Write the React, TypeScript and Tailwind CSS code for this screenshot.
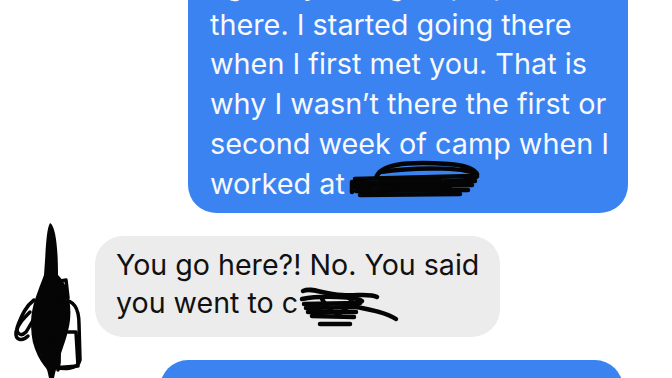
import React from "react";

function Scribble({ className, d, w, h }: { className: string; d: string[]; w: number; h: number }) {
  return (
    <svg className={className} width={w} height={h} viewBox={`0 0 ${w} ${h}`} fill="none">
      {d.map((p, i) => (
        <path key={i} d={p} stroke="#050505" strokeWidth={4.5} strokeLinecap="round" strokeLinejoin="round" />
      ))}
    </svg>
  );
}

export default function App() {
  return (
    <div className="relative w-[672px] h-[378px] overflow-hidden bg-white font-['Inter','Liberation_Sans',sans-serif]">
      <div className="flex flex-col gap-[23px] mt-[-43px]">
        {/* sent */}
        <div className="flex justify-end pr-[44px]">
          <div className="w-[440px] rounded-[28px] bg-[#3a83f1] pl-[22px] pr-2 pt-2 pb-[10px] text-[28.8px] leading-[39.7px] text-[#f7f9ff] whitespace-nowrap">
            I go to youth group up
            <br />
            there. I started going there
            <br />
            when I first met you. That is
            <br />
            why I wasn’t there the first or
            <br />
            second week of camp when I
            <br />
            worked at
          </div>
        </div>

        {/* received */}
        <div className="flex pl-[95px]">
          <div className="w-[405px] rounded-[28px] bg-[#ececec] pl-[21px] pr-2 pt-[10px] pb-[15px] text-[28.6px] leading-[38px] text-[#111] whitespace-nowrap">
            You go here?! No. You said
            <br />
            you went to c
          </div>
        </div>

        {/* sent */}
        <div className="flex justify-end pr-[49px]">
          <div className="w-[463px] h-[80px] rounded-[28px] bg-[#3a83f1]" />
        </div>
      </div>

      {/* avatar scribble */}
      <svg className="absolute left-0 top-[220px]" width={100} height={158} viewBox="0 0 100 158" fill="none">
        <path
          d="M50 3 C56 6 58 30 58 55 C66 62 72 80 70 100 C68 118 60 132 54 158 L49 158 C46 140 36 130 32 112 C28 92 38 72 44 55 C46 30 46 10 50 3 Z"
          fill="#050505"
        />
        <g stroke="#050505" strokeWidth={3.5} strokeLinecap="round" strokeLinejoin="round">
          <path d="M56 62 L66 60 L68 78 L58 80" />
          <path d="M62 80 C74 80 79 88 79 104 L80 140 C78 150 62 150 54 146" />
          <path d="M52 112 L76 112 L78 146 L52 148 Z" />
          <path d="M34 80 C26 86 22 95 18 105 C15 112 20 118 26 112 C30 106 34 98 38 92" />
          <path d="M30 92 C24 98 18 104 16 112 C15 120 22 122 28 116" />
          <path d="M34 100 C30 120 40 140 50 150" />
          <path d="M56 120 C60 130 60 140 58 150" />
        </g>
      </svg>

      {/* redaction scribbles */}
      <Scribble
        className="absolute left-[340px] top-[152px]"
        w={150}
        h={60}
        d={[
          "M36 26 C40 13 62 9 108 12 C124 13 134 17 137 22",
          "M40 20 C80 14 134 16 137 23 C140 31 80 30 28 33",
          "M15 27 L132 24",
          "M14 31 L135 29",
          "M15 35 L132 33",
          "M16 39 L128 38",
          "M20 43 L120 42",
          "M40 29 L100 29 M40 36 L110 36",
          "M12 30 L12 40",
        ]}
      />
      <Scribble
        className="absolute left-[262px] top-[277px]"
        w={150}
        h={55}
        d={[
          "M41 14 C50 10 60 17 80 18 C95 19 108 16 115 20",
          "M40 22 C60 18 95 20 100 24",
          "M42 27 L98 26",
          "M44 31 L96 30",
          "M46 35 L94 35",
          "M50 39 L92 40",
          "M95 30 C110 33 125 36 134 42",
          "M58 47 L88 47",
          "M60 22 C70 40 80 42 90 22",
        ]}
      />
    </div>
  );
}
